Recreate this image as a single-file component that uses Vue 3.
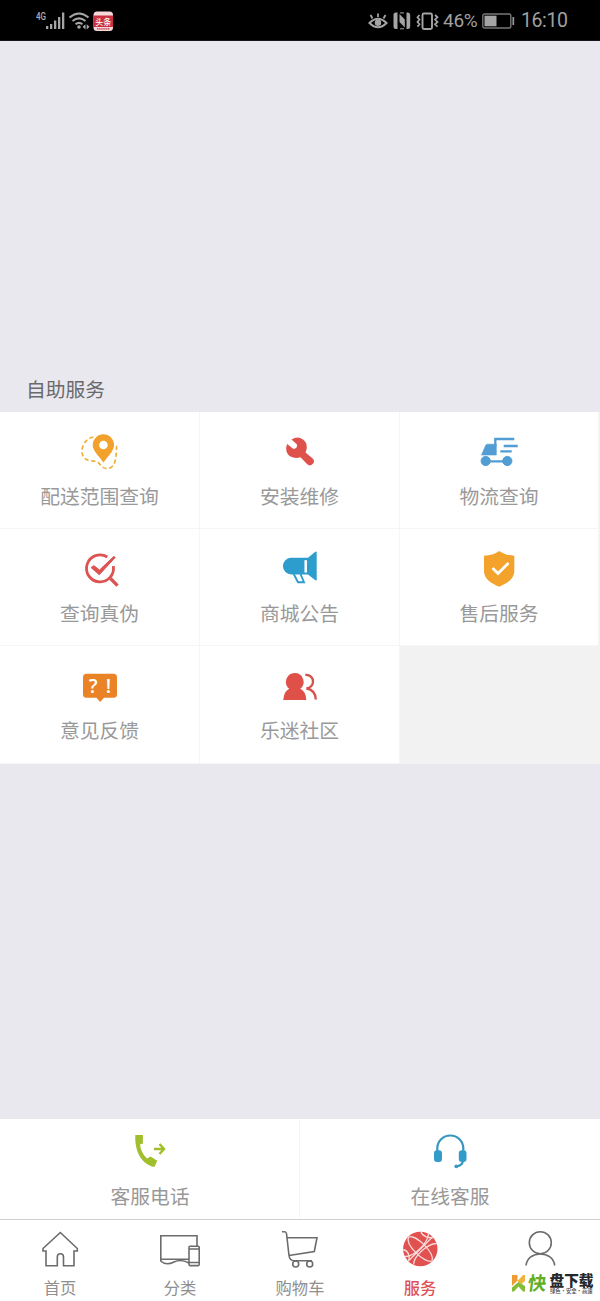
<script setup>
const services = [
  { key: 'range', label: '配送范围查询' },
  { key: 'repair', label: '安装维修' },
  { key: 'truck', label: '物流查询' },
  { key: 'verify', label: '查询真伪' },
  { key: 'notice', label: '商城公告' },
  { key: 'shield', label: '售后服务' },
  { key: 'feedback', label: '意见反馈' },
  { key: 'community', label: '乐迷社区' },
]
const tabs = [
  { key: 'home', label: '首页' },
  { key: 'category', label: '分类' },
  { key: 'cart', label: '购物车' },
  { key: 'service', label: '服务', active: true },
  { key: 'user', label: '' },
]
</script>

<template>
  <div class="screen">
    <header class="status">
      <svg class="status-left" width="80" height="24" viewBox="0 0 80 24">
        <text x="0" y="10.800" font-size="10" font-weight="500" textLength="10" lengthAdjust="spacingAndGlyphs" fill="#b0b0b0">4G</text>
        <g fill="#a5a5a5">
          <rect x="10" y="17" width="2.300" height="3" /><rect x="14" y="15" width="2.300" height="5" />
          <rect x="18" y="11.500" width="2.300" height="8.500" /><rect x="22" y="8" width="2.300" height="12" />
          <rect x="26" y="3.500" width="2.300" height="16.500" />
        </g>
        <g fill="none" stroke="#a5a5a5" stroke-width="2">
          <path d="M33.500 8.500Q43 .5 52.500 8.500M36.500 12Q43 6.800 49.500 12M39.500 15.200Q43 12.500 46.500 15.200" />
        </g>
        <circle cx="43" cy="18" r="1.800" fill="#a5a5a5" />
        <path d="M49.500 15.200L46.500 17.800L49.500 20.400ZM50.700 15.200L53.500 17.800L50.700 20.400Z" fill="#a5a5a5" />
        <rect x="57.500" y="2.500" width="19.500" height="19.500" rx="3.500" fill="#f3d9da" />
        <rect x="57.500" y="6.500" width="19.500" height="11.500" fill="#c8303f" />
        <text x="59.300" y="15.800" font-size="8.500" font-weight="500" fill="#fff" textLength="16" lengthAdjust="spacingAndGlyphs">头条</text>
        <path d="M61 19.800H74" stroke="#c8303f" stroke-width="1.200" stroke-dasharray="1.500 .6" />
      </svg>
      <div class="status-right">
        <svg width="74" height="24" viewBox="0 0 74 24" fill="none" stroke="#a5a5a5">
          <path d="M1.500 14Q10 5.500 18.500 14Q10 22.500 1.500 14Z" stroke-width="2" />
          <circle cx="10" cy="13.700" r="3.200" fill="#a5a5a5" stroke="none" />
          <path d="M10 8V4.500M4.500 9.500L2.500 6M15.500 9.500L17.500 6" stroke-width="1.800" />
          <path d="M29.500 3.500H28Q25.500 3.500 25.500 6V17.500Q25.500 20 28 20H29.500V3.500ZM38.500 3.500H40Q42.200 3.500 42.200 6V17.500Q42.200 20 40 20H38.500V3.500Z" fill="#a5a5a5" stroke="none" />
          <path d="M31.500 5L36.800 10.500V18.500L31.500 13Z" fill="#a5a5a5" stroke="none" />
          <path d="M32 19.800H36M32 3.900H36" stroke-width="1" />
          <rect x="54.500" y="4.500" width="9.500" height="15.500" rx="1.500" stroke-width="1.900" />
          <path d="M51.500 6L49.500 8.300L51.500 10.600L49.500 13L51.500 15.300L49.500 17.600M67 6L69.500 8.300L67 10.600L69.500 13L67 15.300L69.500 17.600" stroke-width="1.700" />
        </svg>
        <span class="percent">46%</span>
        <svg class="battery" width="33" height="16" viewBox="0 0 33 16">
          <rect x=".8" y="1" width="28" height="14" rx="1.800" fill="none" stroke="#777" stroke-width="1.400" />
          <rect x="2.500" y="2.700" width="12" height="10.600" fill="#a5a5a5" />
          <path d="M31.300 4V12" stroke="#999" stroke-width="1.700" />
        </svg>
        <span class="time">16:10</span>
      </div>
    </header>

    <main class="content">
      <h2 class="heading">自助服务</h2>
      <section class="grid">
        <div v-for="s in services" :key="s.key" class="cell">
          <svg class="icon" viewBox="0 0 40 40">
            <g v-if="s.key === 'range'">
              <path d="M13.500 5C7 6 2.500 12 2 18C1.500 25 5.500 28 10.500 28.800C16 29 18 29.500 20 32.500C23 36.500 27 37.500 31 35.500C36 32 35.500 25 36.500 20V12" fill="none" stroke="#efb03c" stroke-width="1.700" stroke-dasharray="4.300 2.600" />
              <path d="M23.400 31C19 24.500 12.700 19 12.700 13A10.700 10.700 0 0 1 34.100 13C34.100 19 28 24.500 23.400 31Z" fill="#fff" stroke="#fff" stroke-width="3" />
              <path fill-rule="evenodd" d="M23.400 30.500C19 24 12.700 19 12.700 13A10.700 10.700 0 0 1 34.100 13C34.100 19 28 24 23.400 30.500ZM23.400 8.700A4.300 4.300 0 1 0 23.400 17.300A4.300 4.300 0 1 0 23.400 8.700Z" fill="#f2a12c" />
            </g>
            <g v-else-if="s.key === 'repair'" fill="#df514b">
              <path d="M11.500 7.500L17 12.500Q17.500 16.500 13.500 17L7.200 12C5 17 6.500 22 10.500 24.500C13.500 26.200 17.500 26.200 20.500 25.200L27 32A3.900 3.900 0 0 0 32.700 26.500L25.500 20.500C27.800 15.500 27 10.500 23 7.500C19.500 4.800 15.500 4.800 11.500 7.500Z" />
            </g>
            <g v-else-if="s.key === 'truck'" fill="#519dd4" stroke="#519dd4">
              <path d="M2.500 23L6.700 13.300Q7.200 12.200 8.500 12.200H17.300V23Z" stroke-width=".6" />
              <path d="M16.300 14V7H35.300M24.700 14H38.700M21.300 19.300H32.700M6 29.300H28" fill="none" stroke-width="2.300" />
              <circle cx="6.700" cy="29" r="4.600" /><circle cx="28.300" cy="29" r="4.600" />
            </g>
            <g v-else-if="s.key === 'verify'" fill="none" stroke="#dc5352">
              <path d="M27.300 8A13.500 13.500 0 1 0 33.300 17" stroke-width="2.800" />
              <path d="M30.500 29.500L37.500 36.700" stroke-width="3.300" />
              <path d="M11 18.500L14 16.700L19.500 21L34 7.300L35.200 8.500L19.300 25.700Z" fill="#dc5352" stroke-width="1" />
            </g>
            <g v-else-if="s.key === 'notice'">
              <path d="M11.300 8.700H28L35 3Q36.700 2 36.700 3.300V30.700Q36.700 32 35 31L28 25.500H11.300A8.400 8.400 0 0 1 11.300 8.700Z" fill="#2c9dcd" />
              <path d="M25.700 11.200V23.500" stroke="#fff" stroke-width="2.500" />
              <path d="M13.700 25L18 33.200H24L20.500 25" fill="none" stroke="#2c9dcd" stroke-width="1.900" />
            </g>
            <g v-else-if="s.key === 'shield'">
              <path d="M20.200 2C24.500 5.200 29.500 6.300 35.300 6.700V22C35.300 30 28 34.500 20.200 37.700C12.500 34.500 5 30 5 22V6.700C11 6.300 16 5.200 20.200 2Z" fill="#f3a22c" />
              <path d="M13.500 19L19 24.500L29.500 14" fill="none" stroke="#fff" stroke-width="2.700" />
            </g>
            <g v-else-if="s.key === 'feedback'">
              <path d="M6.500 7.700H33.500Q37 7.700 37 11.200V28.200Q37 31.700 33.500 31.700H24L20.200 36L16.500 31.700H6.500Q3 31.700 3 28.200V11.200Q3 7.700 6.500 7.700Z" fill="#e98325" />
              <text x="8.800" y="26.500" font-size="19.500" font-weight="600" fill="#fff" class="latin">?</text>
              <text x="25.700" y="26.500" font-size="19.500" font-weight="600" fill="#fff" class="latin">!</text>
            </g>
            <g v-else>
              <path d="M14.700 7A8.900 8.900 0 0 1 20.300 22.800Q26 25.500 26.300 34H3.300Q3.800 25.500 9.200 22.800A8.900 8.900 0 0 1 14.700 7Z" fill="#df5049" />
              <path d="M25.300 8.900C30.500 8.600 33.300 12 33 16C32.700 19.500 30.500 21.700 26.500 22.500C32.500 23.500 35.500 27 35.800 33.500" fill="none" stroke="#d6514d" stroke-width="2.300" />
            </g>
          </svg>
          <span class="label">{{ s.label }}</span>
        </div>
      </section>
    </main>

    <section class="contact">
      <div class="contact-item">
        <svg class="icon" viewBox="0 0 40 40">
          <path d="M5.300 4H12.900V12.500L10 13.500C10.500 19 13 23.500 17 27.500L20.500 25.500L27.300 29.700L24.300 36C12 33.500 4.500 21 5.300 4Z" fill="#a1bf2d" />
          <path d="M24 18H33M29.500 13L34 18L29.500 23" fill="none" stroke="#a1bf2d" stroke-width="2.500" />
        </svg>
        <span class="label">客服电话</span>
      </div>
      <div class="contact-item">
        <svg class="icon" viewBox="0 0 40 40">
          <g fill="none" stroke="#3997bf" stroke-width="2.200">
            <path d="M7.300 20V17.500A13 13 0 0 1 33.300 17.500V20M32.900 29Q33 34.500 27 35.300" />
          </g>
          <rect x="4" y="19.200" width="8" height="11.700" rx="3" fill="#329bca" />
          <rect x="28.800" y="19.200" width="7.700" height="11.700" rx="3" fill="#329bca" />
          <circle cx="26.300" cy="35.300" r="1.900" fill="#329bca" />
        </svg>
        <span class="label">在线客服</span>
      </div>
    </section>

    <nav class="tabs">
      <div v-for="t in tabs" :key="t.key" class="tab" :class="{ active: t.active }">
        <svg class="icon" viewBox="0 0 40 40" fill="none" stroke="#6c6c6c" stroke-width="1.600">
          <path v-if="t.key === 'home'" d="M20.300 3.500L3 19.500V22H6V36.700H17.300V28Q17.300 24.800 20.400 24.800Q23.500 24.800 23.500 28V36.700H34V22H37.300V19.500Z" />
          <g v-else-if="t.key === 'category'">
            <path d="M29 30.300H.8V6.700H37V17M.8 30.300V32Q6 37 14 33Q21 29.500 29 34" />
            <rect x="29" y="17.300" width="10.200" height="19.300" rx="1" />
            <path d="M29 20H39.500M29 33.500H39.500" />
          </g>
          <g v-else-if="t.key === 'cart'">
            <path d="M2 2.700H4.500Q6.300 2.700 6.500 4.500L9 26.500Q9.700 31.700 14 31.700H32M7 8.700H37L34.300 22.500L9 26.500" />
            <circle cx="15.700" cy="35" r="3" /><circle cx="29.700" cy="35" r="3" />
          </g>
          <g v-else-if="t.key === 'service'">
            <circle cx="20.300" cy="20" r="17.200" fill="#e15150" stroke="none" />
            <g stroke="#f8dcda" stroke-width="1.300">
              <path d="M8.500 8C16 5 35 24 32 32C25 35 5 16 8.500 8ZM8 32.300L32.500 8" />
              <path d="M21 3C23 8 29 9 33 8.500M3.200 20.500C9 22 10 28 8.500 32M28.500 4.700C28 14 14 28 5 27.500M36.500 14.500C27 15 14 27 13.500 35.500" />
            </g>
          </g>
          <g v-else>
            <circle cx="20.300" cy="13.700" r="11" />
            <path d="M6 36.500C7 29 13 25 20.300 25C27.700 25 33.700 29 34.700 36.500" />
          </g>
        </svg>
        <span v-if="t.label" class="tab-label">{{ t.label }}</span>
      </div>
    </nav>

    <svg class="watermark" width="88" height="35" viewBox="0 -6 88 35">
      <path d="M0 3H5.500V8.500L0 14Z" fill="#ef9c32" />
      <path d="M6 8.500L11 3H13V9L9.500 12L6 10Z" fill="#f0b43c" />
      <path d="M0 15.500L6.500 10L13 14V19.500H11L6.500 14.500L2 19.500H0Z" fill="#83bd37" />
      <g transform="translate(15 18) skewX(-8)"><text font-size="18.500" font-weight="700" fill="#62ae25">快</text></g>
      <text x="37.500" y="14" font-size="14.500" font-weight="900" fill="#25272a" textLength="44" lengthAdjust="spacingAndGlyphs">盘下载</text>
      <text x="38" y="20.600" font-size="5.300" font-weight="500" fill="#464646" textLength="42.500">绿色·安全·高速</text>
    </svg>
  </div>
</template>

<style>
body { margin: 0; background: #e9e8ef; }
</style>

<style scoped>
.screen {
  position: relative;
  display: flex;
  flex-direction: column;
  width: 600px;
  height: 1301px;
  overflow: hidden;
  background: #e9e8ef;
  font-family: "Noto Sans CJK SC", sans-serif;
}
.status {
  display: flex;
  justify-content: space-between;
  box-sizing: border-box;
  height: 41px;
  padding: 9px 33px 0 36px;
  background: #000;
  border-bottom: 1px solid #171719;
  font-family: Roboto, "Noto Sans CJK SC", sans-serif;
  color: #a0a0a0;
}
.status-right { display: flex; align-items: center; height: 24px; }
.percent { width: 35px; margin-left: 1px; font-size: 19px; line-height: 24px; letter-spacing: -.3px; white-space: nowrap; }
.battery { margin: 0 6px 0 4px; }
.time { width: 46px; font-size: 19.5px; line-height: 24px; letter-spacing: -.4px; white-space: nowrap; }
.content { flex: 1; padding-top: 333px; }
.heading {
  margin: 0 0 8px 26px;
  font-size: 19.8px;
  font-weight: 400;
  line-height: 30px;
  color: #6a6a6d;
}
.grid {
  display: grid;
  grid-template-columns: 200px 200px 199px;
  grid-template-rows: 117px 117px 118px;
  width: 599px;
  padding-right: 1px;
  background: #f2f2f2;
}
.cell {
  display: flex;
  flex-direction: column;
  align-items: center;
  padding-top: 20px;
  background: #fff;
  border-right: 1px solid #f5f5f7;
  border-bottom: 1px solid #f5f5f7;
}
.icon { display: block; width: 40px; height: 40px; }
.latin { font-family: "Open Sans", sans-serif; }
.label {
  margin-top: 10px;
  font-size: 19.8px;
  font-weight: 400;
  line-height: 28px;
  color: #999;
}
.contact { display: flex; height: 100px; background: #fff; }
.contact-item {
  flex: 1;
  display: flex;
  flex-direction: column;
  align-items: center;
  padding-top: 12px;
}
.contact-item:first-child { box-shadow: inset -1px 0 #f5f5f7; }
.contact .label { margin-top: 11px; }
.tabs {
  display: flex;
  box-sizing: border-box;
  height: 82px;
  border-top: 1px solid #cfcfcf;
  background: #fff;
}
.tab {
  flex: 1;
  display: flex;
  flex-direction: column;
  align-items: center;
  padding-top: 9px;
}
.tab-label {
  margin-top: 6px;
  font-size: 16.3px;
  font-weight: 400;
  line-height: 24px;
  color: #909090;
}
.active .tab-label { font-weight: 500; color: #de5358; }
.watermark { position: absolute; left: 512px; top: 1266px; }
</style>
